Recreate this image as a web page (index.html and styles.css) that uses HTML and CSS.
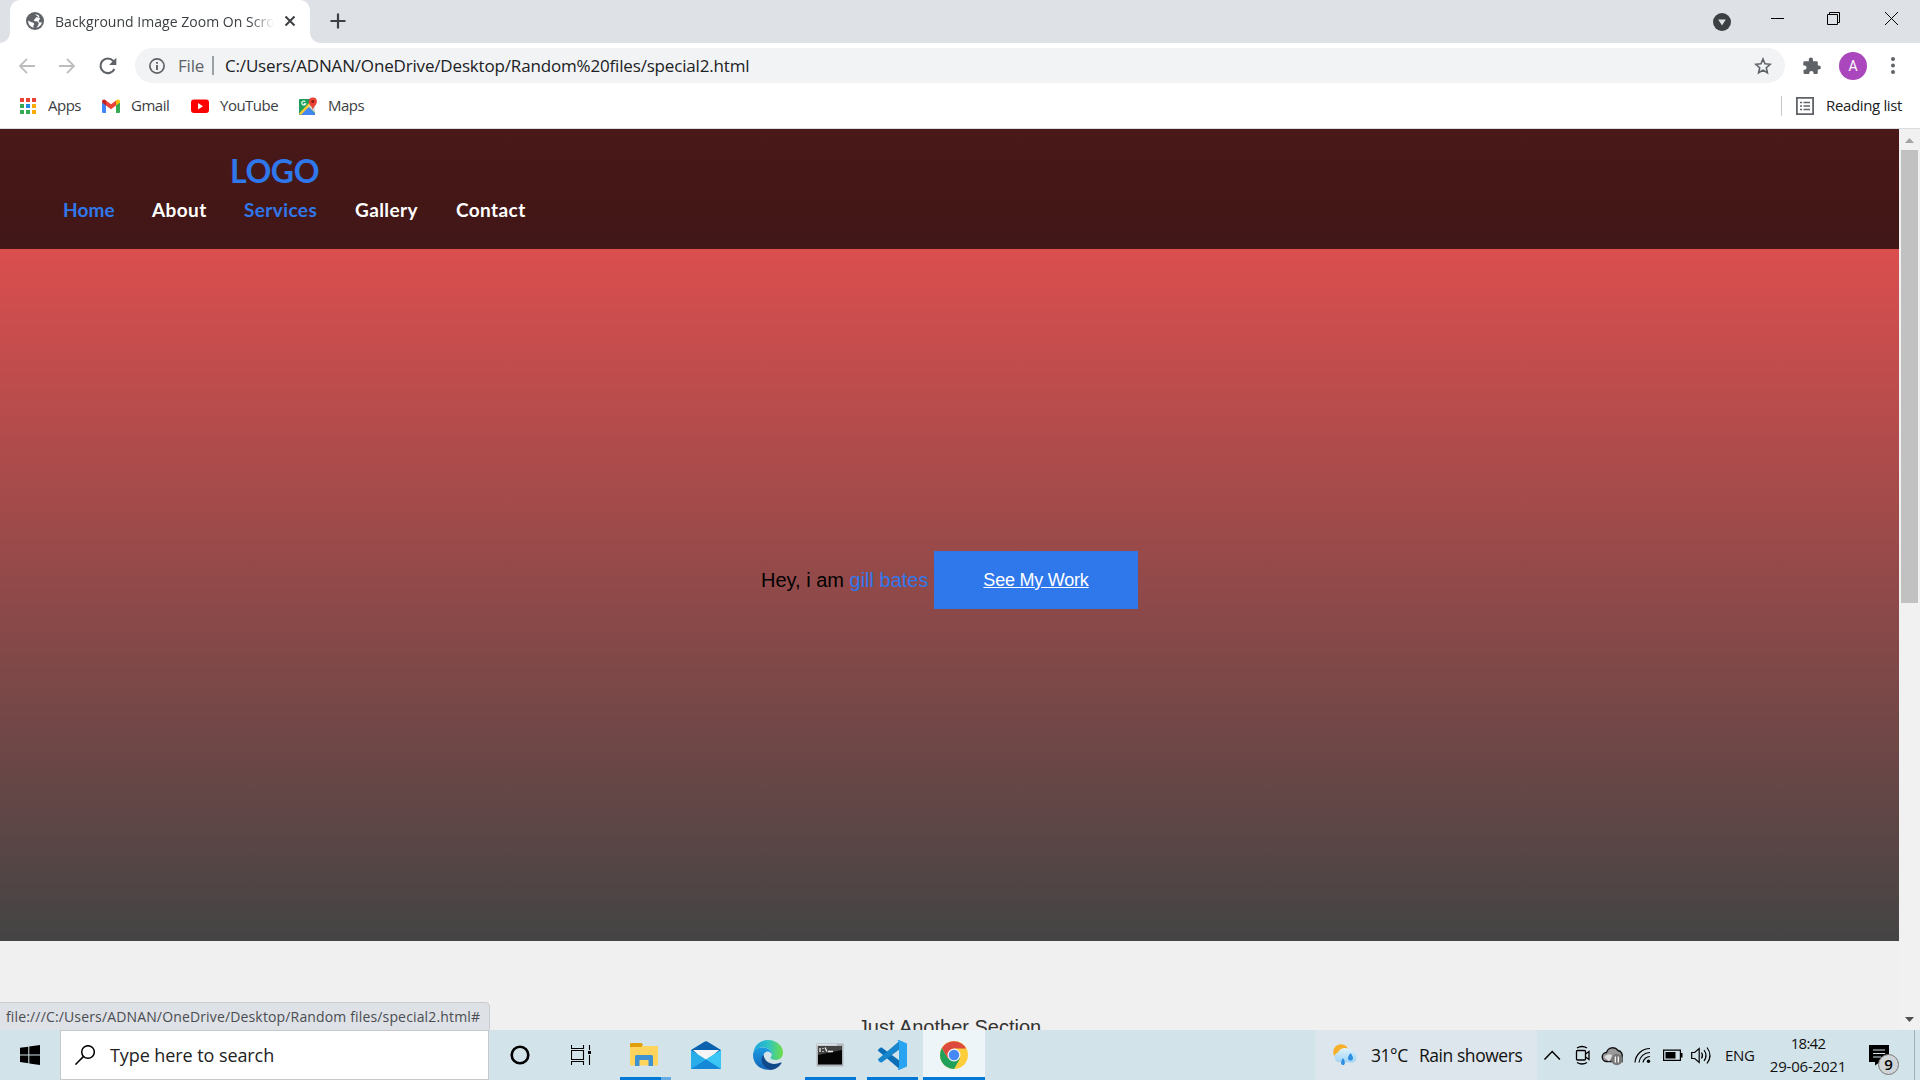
FILE: index.html
```html
<!DOCTYPE html>
<html lang="en">
<head>
<meta charset="utf-8">
<title>Background Image Zoom On Scroll</title>
<link rel="stylesheet" href="styles.css">
</head>
<body>
<div class="tabstrip">
  <div class="tab">
    <svg class="globe" width="18" height="18" viewBox="0 0 18 18"><circle cx="9" cy="9" r="9" fill="#5f6368"/><path d="M9 2.200c2 0 3.500.800 4.600 2l-1.400 1.300-2.300-.2-.7 1.700-1.500.8.8 1.500h2.700l1.600 1.600-.6 2.300L10.300 15.800c3-.6 5.300-3 5.600-5.600l-2.200.3-1.200-1.600 1.700-2.300M2.200 8.600l3.200 1.700 1.600.3 1.400 1.500-1 1.300.2 2.300C4.300 15.200 2 12.200 2.200 8.600z" fill="#fff"/></svg>
    <span class="tab-title">Background Image Zoom On Scroll</span>
    <svg class="tab-close" width="12" height="12" viewBox="0 0 12 12"><path d="M1.500 1.500l9 9M10.500 1.500l-9 9" stroke="#3c4043" stroke-width="2"/></svg>
  </div>
  <svg class="newtab" width="16" height="16" viewBox="0 0 16 16"><path d="M8 .5v15M.5 8h15" stroke="#3c4043" stroke-width="2.200"/></svg>
  <div class="window-controls">
    <svg class="tab-search" width="18" height="18" viewBox="0 0 18 18"><circle cx="9" cy="9" r="9" fill="#3c4043"/><path d="M5.200 6.400h7.600L9 12.600z" fill="#dee1e6"/></svg>
    <svg width="13" height="13" viewBox="0 0 13 13"><path d="M0 6.500h13" stroke="#000"/></svg>
    <svg width="13" height="13" viewBox="0 0 13 13" fill="none" stroke="#000"><path d="M.5 2.500h10v10h-10zM2.500 2.500v-2h10v10h-2"/></svg>
    <svg class="close" width="13" height="13" viewBox="0 0 13 13"><path d="M0 0l13 13M13 0L0 13" stroke="#000"/></svg>
  </div>
</div>
<div class="toolbar">
  <svg class="nav-icon" width="16" height="16" viewBox="0 0 16 16" fill="none" stroke="#babcbe" stroke-width="1.800"><path d="M16 8H1.500M8 .8L.9 8 8 15.200"/></svg>
  <svg class="nav-icon" width="16" height="16" viewBox="0 0 16 16" fill="none" stroke="#babcbe" stroke-width="1.800"><path d="M0 8h14.500M8 .8L15.100 8 8 15.200"/></svg>
  <svg class="reload" width="18" height="18" viewBox="0 0 18 18"><path d="M15.400 12A7.300 7.300 0 1 1 14.300 4l1.500 1.500" fill="none" stroke="#5f6368" stroke-width="2.100"/><path d="M17.300.8v7.200h-7.200z" fill="#5f6368"/></svg>
  <div class="omnibox">
    <svg width="16" height="16" viewBox="0 0 16 16"><circle cx="8" cy="8" r="7.100" fill="none" stroke="#5f6368" stroke-width="1.700"/><path d="M8 7v5M8 4v1.800" stroke="#5f6368" stroke-width="1.900"/></svg>
    <span class="scheme">File</span><span class="divider"></span><span class="url">C:/Users/ADNAN/OneDrive/Desktop/Random%20files/special2.html</span>
    <svg class="star" width="18" height="18" viewBox="0 0 18 18"><path d="M9 2l2 4.800 5.200.5-3.900 3.400 1.100 5.100L9 13.100l-4.400 2.700 1.100-5.100-3.900-3.400L7 6.800z" fill="none" stroke="#5f6368" stroke-width="1.600"/></svg>
  </div>
  <svg class="puzzle" width="18" height="18" viewBox="0 0 18 18"><path d="M1.500 4.200h4.300V2.600a2 2 0 0 1 4.200 0v1.600h3.600q1.200 0 1.200 1.200v3h1a2.100 2.100 0 0 1 0 4.200h-1v3.200q0 1.300-1.200 1.300h-3v-.8a2.200 2.200 0 0 0-4.400 0v.8H1.800q-1.300 0-1.300-1.300v-3h.9a2.200 2.200 0 0 0 0-4.400H.3V5.400q0-1.200 1.200-1.200z" fill="#5f6368"/></svg>
  <span class="avatar">A</span>
  <svg class="kebab" width="4" height="17" viewBox="0 0 4 17" fill="#5f6368"><circle cx="2" cy="2" r="2"/><circle cx="2" cy="8.500" r="2"/><circle cx="2" cy="15" r="2"/></svg>
</div>
<div class="bookmarks">
  <div class="bm apps"><svg width="18" height="18" viewBox="0 0 18 18"><path d="M1 1h4v4H1zM7 1h4v4H7zM13 1h4v4h-4z" fill="#ea4335"/><path d="M1 7h4v4H1zM1 13h4v4H1z" fill="#34a853"/><path d="M7 7h4v4H7z" fill="#1e88e5"/><path d="M7 13h4v4H7z" fill="#34a853"/><path d="M13 7h4v4h-4zM13 13h4v4h-4z" fill="#fbab05"/></svg><span>Apps</span></div>
  <div class="bm gmail"><svg width="18" height="18" viewBox="0 0 18 18"><path d="M0 5l4 3v8H1.200Q0 16 0 14.800z" fill="#4285f4"/><path d="M18 5l-4 3v8h2.800q1.200 0 1.200-1.200z" fill="#34a853"/><path d="M4 3.500L9 7.300l5-3.800v5L9 12.300 4 8.500z" fill="#ea4335"/><path d="M0 4.500Q0 2.500 2 2.500q.8 0 2 1v5L0 5.500z" fill="#c5221f"/><path d="M18 4.500q0-2-2-2-.8 0-2 1v5l4-3z" fill="#fbbc04"/></svg><span>Gmail</span></div>
  <div class="bm youtube"><svg width="18" height="18" viewBox="0 0 18 18"><rect y="2.500" width="18" height="13.500" rx="3" fill="#f00"/><path d="M7 6l5 3.200L7 12.400z" fill="#fff"/></svg><span>YouTube</span></div>
  <div class="bm maps"><svg width="18" height="18" viewBox="0 0 18 18"><rect y="2" width="16" height="16" rx="1" fill="#1b9e5a"/><path d="M1.500 18L8.500 9l7.500 8v1z" fill="#4285f4"/><path d="M0 16.500L10 6l2 2L1.800 18z" fill="#fcc934"/><path d="M9 9l7 7V8z" fill="#dadce0"/><path d="M3 18l5.500-6.500L15 18z" fill="#4285f4"/><path d="M6.300 4.700a2 2 0 1 0 .3 2.200H4.700" fill="none" stroke="#fff" stroke-width="1.100"/><path d="M13.800 13c-.6-3.600-4-4.800-4-8.400a4 4 0 0 1 8.100 0c0 3.600-3.400 4.800-4.100 8.400z" fill="#ea4335"/><circle cx="13.800" cy="4.500" r="1.500" fill="#8b1a12"/></svg><span>Maps</span></div>
  <div class="reading"><svg width="18" height="18" viewBox="0 0 18 18" fill="none" stroke="#5f6368" stroke-width="1.800"><path d="M.9.900h16.200v16.200H.9z"/><path d="M4 5.500h2M7.500 5.500H14M4 9h2M7.500 9H14M4 12.500h2M7.500 12.500H14" stroke-width="1.500"/></svg><span>Reading list</span></div>
</div>
<div class="viewport">
  <div class="page">
    <section class="hero">
      <header class="site-header">
        <div class="logo">LOGO</div>
        <nav><a class="active n1">Home</a><a class="n2">About</a><a class="active n3">Services</a><a class="n4">Gallery</a><a class="n5">Contact</a></nav>
      </header>
      <div class="intro"><span class="hey">Hey, i am <em>gill bates</em></span><a class="cta"><span>See My Work</span></a></div>
    </section>
    <section class="next">Just Another Section</section>
  </div>
  <div class="scrollbar">
    <svg width="9" height="5" viewBox="0 0 9 5"><path d="M4.500 0L9 5H0z" fill="#a3a3a3"/></svg>
    <div class="thumb"></div>
    <svg class="down" width="9" height="5" viewBox="0 0 9 5"><path d="M0 0h9L4.500 5z" fill="#505050"/></svg>
  </div>
  <div class="status"><span>file:///C:/Users/ADNAN/OneDrive/Desktop/Random files/special2.html#</span></div>
</div>
<div class="taskbar">
  <div class="start"><svg width="20" height="20" viewBox="0 0 20 20"><path d="M0 2.800L8.300 1.700v7.700H0zM9.300 1.500L20 0v9.400H9.300zM0 10.400h8.300v7.800L0 17.100zM9.300 10.400H20V20L9.300 18.400z"/></svg></div>
  <div class="search"><svg width="20" height="20" viewBox="0 0 20 20" fill="none" stroke="#000" stroke-width="1.500"><circle cx="13" cy="7" r="6.300"/><path d="M8.600 11.400L.4 19.600"/></svg><span>Type here to search</span></div>
  <div class="task"><svg width="20" height="20" viewBox="0 0 20 20"><circle cx="10" cy="10" r="8.300" fill="none" stroke="#000" stroke-width="2.600"/></svg></div>
  <div class="task view"><svg width="20" height="20" viewBox="0 0 20 20" fill="none" stroke="#000" stroke-width="1.100"><path d="M.5 5.500h12v9H.5zM.5 0v3.500h12V0M.5 20v-3.500h12V20M18.500 0v5M18.500 10v10"/><path d="M17 6h3v3h-3z" fill="#000" stroke="none"/></svg></div>
  <div class="task open multi"><svg width="28" height="24" viewBox="0 0 28 24"><path d="M0 3h28v18.500q0 1-1 1H1q-1 0-1-1z" fill="#ffd45c"/><path d="M0 1q0-1 1-1h10.500l1.500 1.500L11.500 4H0z" fill="#e09f08"/><path d="M5 23V13.500q0-1.500 1.500-1.500h15q1.500 0 1.500 1.500V23h-4.500v-6h-9v6z" fill="#3f92d2"/></svg></div>
  <div class="task"><svg width="30" height="28" viewBox="0 0 30 28"><path d="M0 9L13 1q2-1.400 4 0l13 8v4H0z" fill="#0a62ae"/><path d="M2 9h26L15 21z" fill="#f3f4f5"/><path d="M0 9l15 9.500L30 9v19H0z" fill="#2aaeea"/><path d="M30 9v19L15 18.500z" fill="#3cc6f5"/><path d="M0 28h30L15 18.500z" fill="#1688d8"/></svg></div>
  <div class="task"><svg width="30" height="30" viewBox="0 0 30 30"><defs><linearGradient id="e1"><stop offset="0" stop-color="#1ca4df"/><stop offset=".5" stop-color="#2fc3c4"/><stop offset="1" stop-color="#6fdf45"/></linearGradient><linearGradient id="e2" x2="0" y2="1"><stop offset="0" stop-color="#1b9de2"/><stop offset="1" stop-color="#1263b6"/></linearGradient></defs><path d="M.3 13C1.500 5 7.500 0 15 0c8.500 0 15 6 15 12.500 0 5-3.500 7.500-7.500 7.500-3 0-5-1-5-2.200 0-.8 1.300-1.300 1.300-3.300C18.800 10 14 7.500 9.500 7.500 5 7.500 1.500 10 .3 13z" fill="url(#e1)"/><path d="M0 15C0 11 4 7.500 9.500 7.500c5 0 9.300 3 9.300 7-.8-2-2.300-3-4-3-2.800 0-4.800 2.500-4.800 6C10 24 14.500 28 19 29.400 8 31.500 0 24 0 15z" fill="url(#e2)"/><path d="M10.500 14.500C6.500 19 9 27 17 29.700c5 .3 9-2.700 11.500-6.500.3-.6-.2-.9-.7-.7-8 3.500-16.300.5-17.300-8z" fill="#114a8b"/></svg></div>
  <div class="task open"><svg width="28" height="24" viewBox="0 0 28 24"><path d="M.5.500h27v23H.500z" fill="#aeb4ba"/><path d="M1 1h20v1.500H1z" fill="#dbe2e8"/><path d="M2 3h24v18.500H2z" fill="#050505"/><path d="M2 3h24v4L2 12z" fill="#444"/><path d="M4 5v4M7 5v1M7 8v1M9 4.500l2 4M12 8.500h5" stroke="#eee" stroke-width="1.300"/></svg></div>
  <div class="task open"><svg width="30" height="30" viewBox="0 0 30 30"><path d="M2.300 8.500l2-1.300L23 21v8.500L.7 10.500z" fill="#0b6fb8"/><path d="M2.300 21.500l2 1.300L23 9V.5L.7 19.500z" fill="#1786cc"/><path d="M22 0l8 3.500v23L22 30q-1 0-1.500-.8Q22 29 22 27V3Q22 1 20.500.8 21 0 22 0z" fill="#29a4f0"/></svg></div>
  <div class="task open current"><svg width="28" height="28" viewBox="0 0 28 28"><circle cx="14" cy="14" r="14" fill="#fdcd3c"/><path d="M1.900 7A14 14 0 0 0 14 28l6-10.500L14 14 8 17.500z" fill="#1fa05b"/><path d="M1.900 7A14 14 0 0 1 26.100 7.500H14L8 17.500z" fill="#db4a3c"/><circle cx="14" cy="14" r="6.500" fill="#f1f3f4"/><circle cx="14" cy="14" r="5.200" fill="#4688f4"/></svg></div>
  <div class="weather"><svg width="26" height="22" viewBox="0 0 26 22"><defs><linearGradient id="w" x2="0" y2="1"><stop offset="0" stop-color="#dff3fd"/><stop offset="1" stop-color="#9fd3f5"/></linearGradient></defs><circle cx="8" cy="8" r="7.800" fill="#f8b02c"/><path d="M5 18a5 5 0 0 1 0-9.500A7.500 7.500 0 0 1 18 7a6 6 0 0 1 2 11.500z" fill="url(#w)"/><path d="M17.500 9c4 5 2.500 7.500 0 7.500s-4-2.500 0-7.500zM10 14c3 4.500 2 7 0 7s-3-2.500 0-7z" fill="#2c8fe2"/></svg><span class="temp">31°C</span><span class="cond">Rain showers</span></div>
  <div class="tray">
    <svg width="30" height="50" viewBox="0 0 30 50" fill="none" stroke="#000" stroke-width="1.500"><path d="M7.500 29.500l7.700-8 7.700 8"/></svg>
    <svg width="30" height="50" viewBox="0 0 30 50" fill="none" stroke="#000" stroke-width="1.300"><rect x="9.500" y="20.500" width="9" height="9.500" rx="1"/><path d="M18.500 24l3.500-2.500v8L18.500 27M10 18q5-3 10 0M10 32.500q5 3 10 0"/></svg>
    <svg width="31" height="50" viewBox="0 0 31 50"><path d="M10 31.500a4.500 4.500 0 0 1-.5-9A6.500 6.500 0 0 1 21 20.500a5 5 0 0 1 4 6.500v4.500z" fill="#999" stroke="#111" stroke-width="1.400"/><path d="M7 27q5-5 9-1l-4 5.500" fill="#ddd"/><circle cx="19.800" cy="29.500" r="5.700" fill="#777"/><path d="M18.300 26.500v6M21.300 26.500v6" stroke="#fff" stroke-width="1.200"/></svg>
    <svg width="30" height="50" viewBox="0 0 30 50" fill="none" stroke="#000" stroke-width="1.200"><path d="M7 32.500A15 15 0 0 1 22 18.500M11 32.500a11 11 0 0 1 11-10M15 32.500a7 7 0 0 1 7-6"/><circle cx="20.500" cy="31.300" r="1.700" fill="#000" stroke="none"/></svg>
    <svg width="29" height="50" viewBox="0 0 29 50"><path d="M5.600 20.100h16.800v10.300H5.600z" fill="none" stroke="#000" stroke-width="1.200"/><path d="M7.500 22h10v6.500h-10zM23 23h1.500v4.500H23z"/></svg>
    <svg width="30" height="50" viewBox="0 0 30 50" fill="none" stroke="#000" stroke-width="1.200"><path d="M4.700 22.500h3l4.500-4v14l-4.500-4h-3zM14.500 22.500q2 3 0 6M17 20q4 5.500 0 11M20 17.500q6 8 0 16"/></svg>
  </div>
  <span class="lang">ENG</span>
  <div class="clock"><span class="time">18:42</span><span class="date">29-06-2021</span></div>
  <svg class="notif" width="34" height="50" viewBox="0 0 34 50"><path d="M4 15h20v17h-9l-5 3.500V32H4z"/><path d="M8 20h12M8 23.500h12M8 27h8" stroke="#d3e2ea" stroke-width="1.200"/><circle cx="23.500" cy="34.500" r="10" fill="#cfd4d7" stroke="#777"/><text x="23.500" y="40" text-anchor="middle" class="count">9</text></svg>
  <div class="desktop"></div>
</div>
</body>
</html>
```
FILE: styles.css
```css
* { box-sizing: border-box; }
body { margin: 0; width: 1920px; height: 1080px; overflow: hidden; background: #fff; font-family: "Open Sans", "Noto Sans", sans-serif; font-size: 15px; color: #3c4043; }
svg { display: block; flex: none; }
span, a { white-space: nowrap; }
.tabstrip { height: 43px; background: #dee1e6; display: flex; align-items: flex-start; }
.tab { position: relative; margin-left: 10px; width: 300px; height: 43px; background: #fff; border-radius: 10px 10px 0 0; display: flex; align-items: center; padding: 0 14px 1px 16px; }
.tab::before, .tab::after { content: ""; position: absolute; bottom: 0; width: 10px; height: 10px; }
.tab::before { left: -10px; background: radial-gradient(circle at 0 0, #dee1e6 9.500px, #fff 10px); }
.tab::after { right: -10px; background: radial-gradient(circle at 100% 0, #dee1e6 9.500px, #fff 10px); }
.tab-title { margin-left: 11px; width: 219px; overflow: hidden; font-size: 14px; letter-spacing: 0.03px; -webkit-mask-image: linear-gradient(90deg, #000 195px, transparent 219px); mask-image: linear-gradient(90deg, #000 195px, transparent 219px); }
.tab-close { margin-left: auto; }
.newtab { margin: 13px 0 0 20px; }
.window-controls { margin-left: auto; display: flex; align-items: center; height: 37px; gap: 43px; padding-right: 22px; }
.tab-search { margin: 6px -3px 0 0; }
.close { margin-left: 2px; }
.toolbar { height: 45px; display: flex; align-items: center; padding-left: 19px; }
.nav-icon { margin-right: 24px; }
.reload { margin-right: 18px; }
.omnibox { width: 1650px; height: 35px; border-radius: 18px; background: #f1f3f4; display: flex; align-items: center; padding: 0 13px 0 14px; font-size: 17px; color: #202124; }
.scheme { width: 34px; margin-left: 13px; color: #5f6368; letter-spacing: -0.2px; }
.divider { width: 2px; height: 19px; background: #9aa0a6; }
.url { margin-left: 11px; letter-spacing: -0.17px; }
.star { margin-left: auto; }
.puzzle { margin-left: 18px; }
.avatar { margin-left: 18px; width: 28px; height: 28px; border-radius: 50%; background: #ab47bc; color: #fff; text-align: center; line-height: 29px; font-size: 14px; font-family: Roboto, sans-serif; }
.kebab { margin-left: 24px; }
.bookmarks { height: 41px; border-bottom: 1px solid #dadce0; display: flex; align-items: center; padding: 0 18px 5px 19px; }
.bm { display: flex; align-items: center; font-size: 15px; letter-spacing: -0.5px; }
.bm span { margin: -2px 0 0 11px; }
.apps { width: 83px; }
.gmail, .maps { width: 89px; }
.youtube { width: 108px; }
.reading { margin-left: auto; display: flex; align-items: center; padding-left: 14px; height: 20px; border-left: 1px solid #c5c8cc; color: #202124; letter-spacing: -0.35px; }
.reading span { margin: -2px 0 0 12px; width: 76px; }
.viewport { position: relative; height: 901px; display: flex; background: #f0f0f0; }
.page { width: 1899px; overflow: hidden; font-family: "Liberation Sans", Arial, sans-serif; }
.hero { height: 812px; background: linear-gradient(#f55050, #444); display: flex; flex-direction: column; }
.site-header { height: 120px; background: rgba(0,0,0,.7); font-family: Lato, sans-serif; font-weight: 700; color: #fff; padding-top: 22px; }
.logo { margin-left: 230px; font-size: 32px; line-height: 40px; color: #2f78ec; letter-spacing: -0.4px; }
nav { display: flex; padding-left: 63px; font-size: 19px; line-height: 38px; letter-spacing: 0.4px; }
.active { color: #2f78ec; }
.n1 { width: 89px; letter-spacing: 0.1px; } .n2 { width: 92px; } .n3 { width: 111px; } .n4 { width: 101px; }
.intro { flex: 1; display: flex; align-items: center; padding: 0 0 30px 761px; font-size: 20px; color: #000; }
.hey { width: 173px; }
em { font-style: normal; color: #2f78ec; }
.cta { width: 204px; height: 58px; background: #2f78ec; color: #fff; display: flex; align-items: center; justify-content: center; font-size: 18px; letter-spacing: -0.22px; text-decoration: underline; }
.next { text-align: center; padding-top: 75px; font-size: 20px; line-height: 23px; color: #333; }
.scrollbar { width: 21px; background: #f1f1f1; display: flex; flex-direction: column; align-items: center; padding: 9px 0 8px; }
.thumb { width: 17px; height: 453px; margin-top: 7px; background: #c1c1c1; }
.down { margin-top: auto; }
.status { position: absolute; left: 0; bottom: 0; width: 490px; height: 28px; background: #dee1e6; border: 1px solid #c8cbd0; border-width: 1px 1px 0 0; border-top-right-radius: 5px; padding-left: 6px; line-height: 27px; font-size: 14px; letter-spacing: 0.15px; color: #4a4d51; }
.taskbar { height: 50px; background: #d3e3ea; display: flex; align-items: center; color: #111; }
.start { width: 60px; display: flex; justify-content: center; }
.search { width: 429px; height: 50px; background: #fff; border: 1px solid #c5c9cc; display: flex; align-items: center; padding-left: 14px; font-size: 18px; letter-spacing: -0.08px; color: #222; }
.search span { margin-left: 15px; }
.task { position: relative; width: 62px; height: 50px; display: flex; align-items: center; justify-content: center; }
.view { padding-right: 2px; }
.open::after { content: ""; position: absolute; bottom: 0; left: 6px; width: 51px; height: 3px; background: #0078d7; }
.multi::after { left: 7px; background: linear-gradient(90deg, #0078d7 41px, #66abe5 41px); }
.current { background: #edf5f8; }
.current::after { left: 0; width: 62px; }
.weather { margin-left: 330px; width: 222px; height: 50px; background: #dde6ec; display: flex; align-items: center; padding-left: 18px; font-size: 17.500px; letter-spacing: -0.45px; }
.temp { margin-left: 12px; width: 48px; }
.tray { display: flex; }
.lang { margin-left: 8px; width: 40px; letter-spacing: -0.3px; }
.clock { width: 86px; display: flex; flex-direction: column; align-items: center; line-height: 23px; color: #111; }
.time { letter-spacing: -0.7px; }
.date { letter-spacing: -0.2px; }
.notif { margin-left: 14px; }
.count { font: 600 15px "Open Sans", sans-serif; }
.desktop { margin-left: 15px; width: 1px; height: 50px; background: #9fb0b8; }
```
